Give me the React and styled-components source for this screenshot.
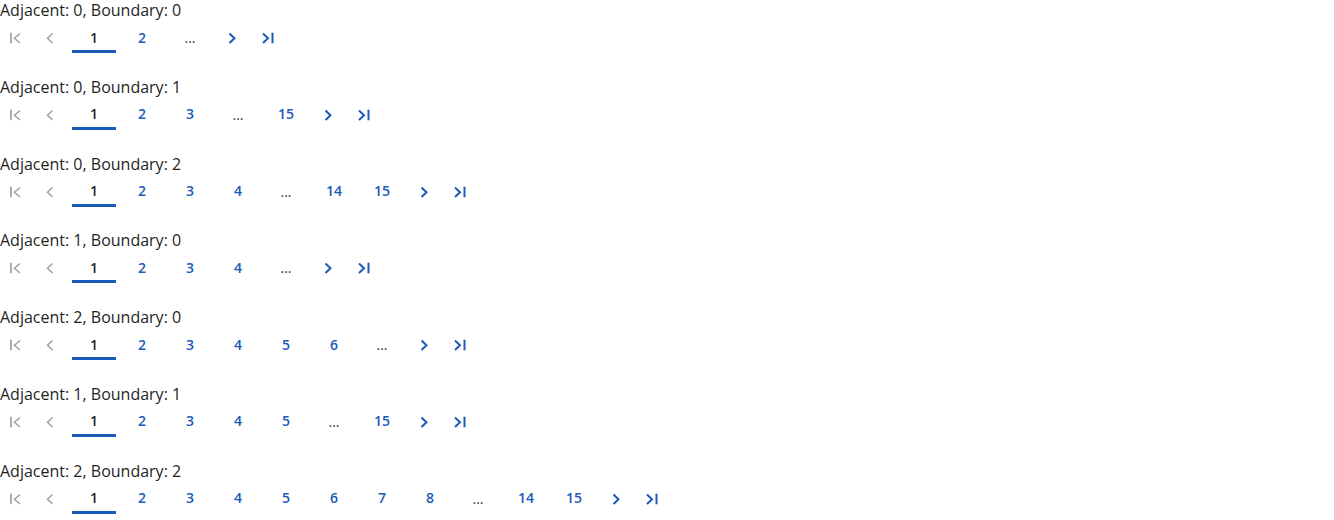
import React from "react";
import styled, { createGlobalStyle } from "styled-components";

const Global = createGlobalStyle`
  body { margin: 0; font-family: "Open Sans", "Noto Sans", sans-serif; background: #fff; color: #1f1f1f; }
`;

const Page = styled.div`
  display: flex;
  flex-direction: column;
  gap: 23.78px;
`;

const Block = styled.section`
  display: flex;
  flex-direction: column;
`;

const Label = styled.div`
  font-size: 16px;
  line-height: 20px;
  height: 20px;
  color: #1f1f1f;
`;

const Bar = styled.nav`
  display: flex;
  gap: 4px;
  height: 32px;
  margin-top: 1px;
`;

const IconBtn = styled.button`
  width: 32px;
  height: 32px;
  padding: 0;
  border: 0;
  background: none;
  display: flex;
  align-items: center;
  justify-content: center;
  color: ${(p) => (p.disabled ? "#a3a3a3" : "#1a5ab8")};
`;

const PageBtn = styled.button`
  width: 44px;
  height: 32px;
  padding: 3px 0 0;
  border: 0;
  background: none;
  font-family: "Open Sans", "Noto Sans", sans-serif;
  font-size: 14px;
  font-weight: 600;
  color: ${(p) => (p.$current ? "#1f1f1f" : "#1a5ab8")};
  border-bottom: 3px solid ${(p) => (p.$current ? "#1a5ab8" : "transparent")};
  display: flex;
  align-items: center;
  justify-content: center;
`;

const Ellipsis = styled.span`
  width: 44px;
  height: 32px;
  display: flex;
  align-items: center;
  justify-content: center;
  font-size: 14px;
  color: #333;
  padding-top: 1px;
  box-sizing: border-box;
`;

const FirstIcon = () => (
  <svg width="20" height="20" viewBox="0 0 20 20" fill="none" stroke="currentColor">
    <path d="M5 5.7v10.6" strokeWidth="1.8" />
    <path d="M14 6.5l-5.5 4.75 5.5 4.75" strokeWidth="1.6" />
  </svg>
);
const PrevIcon = () => (
  <svg width="20" height="20" viewBox="0 0 20 20" fill="none" stroke="currentColor">
    <path d="M10.5 6.5l-5 4.75 5 4.75" strokeWidth="1.6" />
  </svg>
);
const NextIcon = () => (
  <svg width="20" height="20" viewBox="0 0 20 20" fill="none" stroke="currentColor">
    <path d="M7.5 6.5l5 4.75-5 4.75" strokeWidth="2" />
  </svg>
);
const LastIcon = () => (
  <svg width="20" height="20" viewBox="0 0 20 20" fill="none" stroke="currentColor">
    <path d="M5 6.5l5 4.75-5 4.75" strokeWidth="2" />
    <path d="M14.5 5.7v10.6" strokeWidth="2" />
  </svg>
);

const configs = [
  { a: 0, b: 0, list: [1, 2, "e"] },
  { a: 0, b: 1, list: [1, 2, 3, "e", 15] },
  { a: 0, b: 2, list: [1, 2, 3, 4, "e", 14, 15] },
  { a: 1, b: 0, list: [1, 2, 3, 4, "e"] },
  { a: 2, b: 0, list: [1, 2, 3, 4, 5, 6, "e"] },
  { a: 1, b: 1, list: [1, 2, 3, 4, 5, "e", 15] },
  { a: 2, b: 2, list: [1, 2, 3, 4, 5, 6, 7, 8, "e", 14, 15] },
];

export default function App() {
  return (
    <Page>
      <Global />
      {configs.map((c) => (
        <Block key={`${c.a}-${c.b}`}>
          <Label>{`Adjacent: ${c.a}, Boundary: ${c.b}`}</Label>
          <Bar>
            <IconBtn disabled aria-label="First page"><FirstIcon /></IconBtn>
            <IconBtn disabled aria-label="Previous page"><PrevIcon /></IconBtn>
            {c.list.map((it, i) =>
              it === "e" ? (
                <Ellipsis key={`e${i}`}>...</Ellipsis>
              ) : (
                <PageBtn key={it} $current={it === 1}>{it}</PageBtn>
              )
            )}
            <IconBtn aria-label="Next page"><NextIcon /></IconBtn>
            <IconBtn aria-label="Last page"><LastIcon /></IconBtn>
          </Bar>
        </Block>
      ))}
    </Page>
  );
}
